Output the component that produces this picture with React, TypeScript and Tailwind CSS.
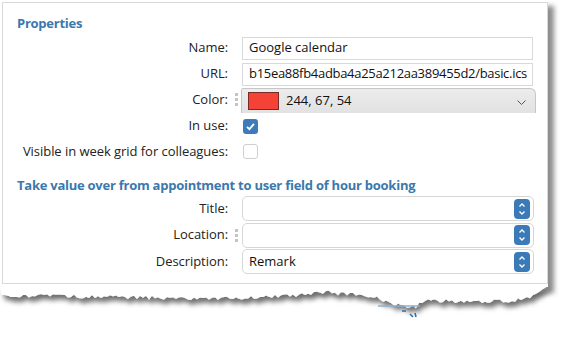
import type { ReactNode } from "react";

const font = { fontFamily: '"Open Sans", "Noto Sans", sans-serif' };

function Handle() {
  return (
    <div className="flex h-full w-[14px] flex-col items-center justify-center gap-[2px] pl-[3px]">
      <span className="h-[3px] w-[3px] bg-[#c4c4c4]" />
      <span className="h-[3px] w-[3px] bg-[#c4c4c4]" />
      <span className="h-[3px] w-[3px] bg-[#c4c4c4]" />
    </div>
  );
}

function Row({
  label,
  handle,
  h,
  children,
}: {
  label: string;
  handle?: boolean;
  h: string;
  children: ReactNode;
}) {
  return (
    <div className={`flex items-center ${h}`}>
      <div className="w-[225px] text-right text-[13px] tracking-[-0.05px] text-[#222]">{label}</div>
      {handle ? <Handle /> : <div className="w-[14px]" />}
      {children}
    </div>
  );
}

function Stepper() {
  return (
    <div className="flex h-[20px] w-[16px] flex-col items-center justify-center rounded-[4px] bg-[#3a7bb7]">
      <svg width="10" height="16" viewBox="0 0 10 16" fill="none" stroke="white" strokeWidth="1.3">
        <path d="M2.5 5.5 L5 3 L7.5 5.5" />
        <path d="M2.5 10.5 L5 13 L7.5 10.5" />
      </svg>
    </div>
  );
}

function SelectBox({ value }: { value?: string }) {
  return (
    <div className="flex h-[25px] w-[292px] items-center justify-between rounded-[5px] border border-[#d6d6d6] bg-white pl-[6px] pr-[3px] text-[13px] text-[#111]">
      <span>{value}</span>
      <Stepper />
    </div>
  );
}

function Check({ on }: { on?: boolean }) {
  return on ? (
    <div className="ml-[1px] flex h-[15px] w-[15px] items-center justify-center rounded-[3px] bg-[#3c7cb9]">
      <svg width="11" height="11" viewBox="0 0 11 11" fill="none" stroke="white" strokeWidth="1.8">
        <path d="M2 5.8 L4.4 8.2 L9 2.8" />
      </svg>
    </div>
  ) : (
    <div className="ml-[1px] h-[15px] w-[15px] rounded-[3px] border border-[#cfcfcf] bg-white" />
  );
}

function rand(i: number) {
  const x = Math.sin(i * 12.9898 + 3.1) * 43758.5453;
  return x - Math.floor(x);
}

function TornEdge() {
  const base: [number, number][] = [
    [0, 9], [60, 10], [120, 11], [200, 13], [260, 11], [300, 9], [320, 6],
    [360, 9], [380, 13], [400, 20], [415, 21], [425, 15], [440, 15], [480, 16],
    [520, 14], [538, 8], [548, 0],
  ];
  const pts: string[] = ["0,0", "548,0"];
  const lower: string[] = [];
  for (let x = 548; x >= 0; x -= 3) {
    let y = 0;
    for (let k = 0; k < base.length - 1; k++) {
      const [x0, y0] = base[k];
      const [x1, y1] = base[k + 1];
      if (x >= x0 && x <= x1) {
        y = y0 + ((y1 - y0) * (x - x0)) / (x1 - x0);
        break;
      }
    }
    y += (rand(x) - 0.5) * 4;
    lower.push(`${x},${Math.max(0, y).toFixed(1)}`);
  }
  return (
    <svg
      className="absolute left-0 top-[286px]"
      width="562"
      height="52"
      viewBox="0 0 562 52"
    >
      <defs>
        <filter id="sh" x="-5%" y="-20%" width="115%" height="200%">
          <feDropShadow dx="3" dy="5" stdDeviation="2.5" floodColor="#000" floodOpacity="0.55" />
        </filter>
      </defs>
      <polygon points={[...pts, ...lower].join(" ")} fill="white" filter="url(#sh)" />
      <line x1="378" y1="20" x2="420" y2="20" stroke="#8fb0cf" strokeWidth="1.5" />
      <path d="M402 25 L406 25 M410 28 L413 31 M415 27 L416 31" stroke="#2f6fae" strokeWidth="1.6" />
    </svg>
  );
}

export default function App() {
  return (
    <div className="relative h-[338px] w-[562px] overflow-hidden bg-white" style={font}>
      <div className="relative h-[287px] w-[548px] bg-white pl-[2px] pt-[2px] shadow-[6px_6px_5px_rgba(0,0,0,0.45)]">
        <div className="h-[282px] w-[546px] border border-[#d9d9d9]">
          <div className="ml-[14px] mt-[11px] h-[18px] text-[13px] font-bold leading-[18px] tracking-[-0.25px] text-[#3b78ad]">
            Properties
          </div>
          <div className="mt-[3px]">
            <Row label="Name:" h="h-[26px]">
              <div className="flex h-[23px] w-[291px] items-center border border-[#d9d9d9] px-[6px] text-[13px] text-[#111]">
                Google calendar
              </div>
            </Row>
            <Row label="URL:" h="h-[26px]">
              <div className="flex h-[23px] w-[291px] items-center overflow-hidden whitespace-nowrap border border-[#d9d9d9] pl-[6px] text-[13px] tracking-[-0.3px] text-[#111]">
                b15ea88fb4adba4a25a212aa389455d2/basic.ics
              </div>
            </Row>
            <div className="flex h-[26px] items-start">
              <div className="flex h-[25px] items-center">
                <div className="w-[225px] text-right text-[13px] text-[#222]">Color:</div>
                <Handle />
              </div>
              <div className="-ml-[1px] mt-[1px] flex h-[25px] w-[295px] items-center rounded-tr-[6px] rounded-tl-[2px] border border-b-0 border-[#c6c6c6] bg-gradient-to-b from-[#ececec] to-[#e2e2e2] pl-[6px] pr-[9px]">
                <div className="h-[18px] w-[31px] border border-[#7a2a24] bg-[rgb(244,67,54)]" />
                <span className="ml-[7px] text-[13px] text-[#111]">244, 67, 54</span>
                <svg className="ml-auto mt-[4px]" width="9" height="6" viewBox="0 0 9 6" fill="none" stroke="#555" strokeWidth="1">
                  <path d="M0.5 0.5 L4.5 4.5 L8.5 0.5" />
                </svg>
              </div>
            </div>
            <Row label="In use:" h="h-[26px]">
              <Check on />
            </Row>
            <Row label="Visible in week grid for colleagues:" h="h-[25px]">
              <Check />
            </Row>
          </div>
          <div className="ml-[14px] mt-[12px] h-[18px] text-[13px] font-bold leading-[18px] tracking-[-0.25px] text-[#3b78ad]">
            Take value over from appointment to user field of hour booking
          </div>
          <div className="mt-[1px]">
            <Row label="Title:" h="h-[27px]">
              <SelectBox />
            </Row>
            <Row label="Location:" handle h="h-[26px]">
              <SelectBox />
            </Row>
            <Row label="Description:" h="h-[27px]">
              <SelectBox value="Remark" />
            </Row>
          </div>
        </div>
      </div>
      <TornEdge />
    </div>
  );
}
